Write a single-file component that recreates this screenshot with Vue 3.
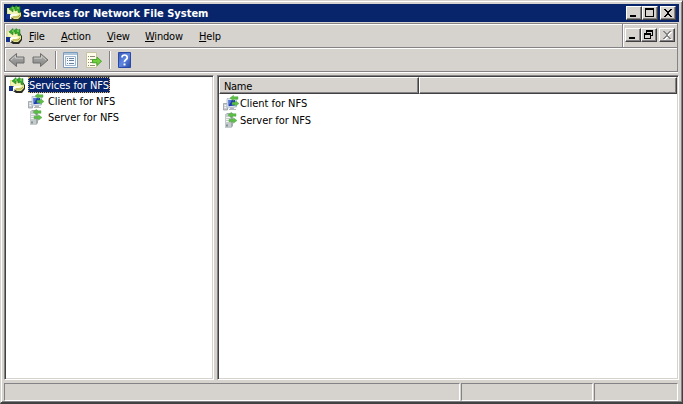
<script setup>
const menus = [
  { name: 'File', width: 32 },
  { name: 'Action', width: 46 },
  { name: 'View', width: 38 },
  { name: 'Window', width: 54 },
  { name: 'Help', width: 40 },
]
const children = [
  { name: 'Client for NFS', icon: '#client' },
  { name: 'Server for NFS', icon: '#server' },
]
</script>

<template>
  <div class="window">
    <svg class="defs" width="0" height="0">
      <defs>
        <linearGradient id="arrowFill" x1="0" y1="0" x2="0" y2="1">
          <stop offset="0" stop-color="#b4b4b2" /><stop offset="1" stop-color="#828282" />
        </linearGradient>
        <linearGradient id="helpFill" x1="0" y1="0" x2="1" y2="1">
          <stop offset="0" stop-color="#3459b4" /><stop offset=".5" stop-color="#5f86e0" /><stop offset="1" stop-color="#2446a5" />
        </linearGradient>
        <symbol id="nfs" viewBox="0 0 16 16">
          <path d="M1 4h12l3 4v4l-3 4H7l-3-2-3-5z" fill="#2a2a20" />
          <path d="M1 3h12v3l2 2v3l-3 3H8l-3-2-4-3z" fill="#dfe58c" />
          <path d="M2 4h3v2h5l3 2v2H5L2 8z" fill="#f3f4b8" />
          <path d="M5 9h6l1 1-2 1H7l-2 1z" fill="#fffef0" />
          <path d="M3 4 7 .5V2h2l1-1.5 2 1.500 2-.5v6h-2V5L9 6V4H7v3z" fill="#35a82c" stroke="#1f7c1c" stroke-width=".5" />
          <path d="M6 3h2M11 3h2" stroke="#a6e47a" />
          <path d="M7 12h5l2-2" fill="none" stroke="#b5a343" />
          <path d="M0 9h5v5H0z" fill="#12308c" /><path d="M4 9.500h1.500V14H4z" fill="#fff" />
        </symbol>
        <symbol id="client" viewBox="0 0 16 16">
          <path d="M.5 8.5h4V15h-4z" fill="#c9cdd1" stroke="#8b9198" stroke-width=".7" />
          <path d="M1.500 10.500h2M1.500 12.500h2" stroke="#f8f8f8" />
          <path d="M4 3.500h9.500V12L4 13z" fill="#dfe6ef" stroke="#9ba9bc" stroke-width=".6" />
          <path d="M5.500 5H12v5.500l-6.500.8z" fill="#1c3eb0" /><path d="M5.500 5H9l-3 5z" fill="#5577d8" />
          <path d="M7 12.500h4V14h2v1H6v-1h1z" fill="#b5b9be" />
          <path d="M7 3 10.500.3V1.700H15v2.600h-4.500v1.400zM16 8.500 12.500 5.800v1.400H9v2.600h3.500v1.400z" fill="#5dbf46" stroke="#45a039" stroke-width=".4" />
        </symbol>
        <symbol id="server" viewBox="0 0 16 16">
          <path d="M2 3 4 1h6v13l-2 2H2z" fill="#a4aaaf" />
          <path d="M2 2h6v14H2z" fill="#c5cacc" /><path d="M3 5.500h4M3 7.500h4M3 9.500h4" stroke="#f4f6f6" />
          <path d="M3 12.500h2v2H3z" fill="#7d9690" />
          <path d="M5 3 8.500.3V1.700H13v2.600H8.500v1.400zM14 8.500 10.500 5.800v1.400H6v2.600h4.500v1.400z" fill="#5dbf46" stroke="#45a039" stroke-width=".4" />
        </symbol>
        <symbol id="arrow" viewBox="0 0 18 16">
          <path d="M1 8 8.5 1.5V5H16v6H8.5v3.5z" fill="url(#arrowFill)" stroke="#6f6f6f" />
          <path d="M3 8 7.5 4v2.2H15" fill="none" stroke="#c9c9c7" />
        </symbol>
      </defs>
    </svg>

    <header class="title">
      <svg class="app-icon" width="16" height="16"><use href="#nfs" /></svg>
      <span class="title-text">Services for Network File System</span>
      <div class="buttons">
        <button class="btn"><svg width="14" height="12" shape-rendering="crispEdges"><path d="M3 8h6v2H3z" /></svg></button>
        <button class="btn"><svg width="14" height="12" shape-rendering="crispEdges"><path fill-rule="evenodd" d="M2 1h9v9H2zM3 3h7v6H3z" /></svg></button>
        <button class="btn close"><svg width="14" height="12" shape-rendering="crispEdges"><path d="M3 2h2v1h1v1h2V3h1V2h2v1h-1v1H9v1H8v2h1v1h1v1h1v1H9V9H8V8H6v1H5v1H3V9h1V8h1V7h1V5H5V4H4V3H3z" /></svg></button>
      </div>
    </header>

    <section class="bars">
      <div class="menubar">
        <svg class="app-icon" width="16" height="16"><use href="#nfs" /></svg>
        <nav>
          <span v-for="m in menus" :key="m.name" class="menu" :style="{ width: m.width + 'px' }"><u>{{ m.name[0] }}</u>{{ m.name.slice(1) }}</span>
        </nav>
        <div class="buttons child">
          <button class="btn"><svg width="14" height="12" shape-rendering="crispEdges"><path d="M3 8h6v2H3z" /></svg></button>
          <button class="btn"><svg width="14" height="12" shape-rendering="crispEdges"><path fill-rule="evenodd" d="M4 1h7v6H9v3H2V4h2zM5 3v1h4v2h1V3zM3 6v3h5V6z" /></svg></button>
          <button class="btn close"><svg width="14" height="12" shape-rendering="crispEdges"><path fill="#fff" d="M4 3h2v1h1v1h2V4h1V3h2v1h-1v1h-1v1H9v2h1v1h1v1h1v1h-2v-1H9V9H7v1H6v1H4v-1h1V9h1V8h1V6H6V5H5V4H4z" /><path fill="#858585" d="M3 2h2v1h1v1h2V3h1V2h2v1h-1v1H9v1H8v2h1v1h1v1h1v1H9V9H8V8H6v1H5v1H3V9h1V8h1V7h1V5H5V4H4V3H3z" /></svg></button>
        </div>
      </div>
      <div class="toolbar">
        <svg width="18" height="16"><use href="#arrow" /></svg>
        <svg class="forward" width="18" height="16"><use href="#arrow" /></svg>
        <i class="sep"></i>
        <svg class="props" width="16" height="16">
          <path d="M.5.5h14v15H.5z" fill="#fcfdff" stroke="#7b9bb8" /><path d="M1 1h13v2H1z" fill="#adc3da" />
          <path d="M2.500 4.500h10v9h-10z" fill="#f5f8fc" stroke="#9fb5cb" />
          <path d="M4 6.500h1M6 6.500h5M4 8.500h1M6 8.500h5M4 11.500h1M6 11.500h5" stroke="#6683a0" />
        </svg>
        <svg class="export" width="18" height="16">
          <path d="M.5.5h10v15H.5z" fill="#fffde9" stroke="#c8c4a3" />
          <path d="M2 4.500h1M4 4.500h5M2 7.500h1M4 7.500h4M2 10.500h1M4 10.500h4M2 13.500h1M4 13.500h5" stroke="#8c8c7b" />
          <path d="M6.500 7.500H11V5l4.500 4.300L11 13.500v-2.700H6.500z" fill="#73ce3e" stroke="#47a629" />
        </svg>
        <i class="sep second"></i>
        <svg class="help" width="14" height="16">
          <path d="M.5.5h12v15H.5z" fill="url(#helpFill)" stroke="#2949a4" />
          <path d="M4 5.500Q4 3 6.500 3t2.800 2.500q0 1.300-1.500 2.300T6.500 10.200" fill="none" stroke="#fff" stroke-width="1.7" /><path d="M5.500 11.500h2v2h-2z" fill="#fff" />
        </svg>
      </div>
    </section>

    <main class="panes">
      <aside class="pane tree">
        <div class="root"><svg width="16" height="16"><use href="#nfs" /></svg><span class="selected"><b>Services for NFS</b></span></div>
        <div v-for="c in children" :key="c.name" class="child-row"><svg width="16" height="16"><use :href="c.icon" /></svg><span class="label">{{ c.name }}</span></div>
      </aside>
      <section class="pane list">
        <div class="columns"><div class="column name"><span>Name</span></div><div class="column"></div></div>
        <div v-for="c in children" :key="c.name" class="list-row"><svg width="16" height="16"><use :href="c.icon" /></svg><span class="label">{{ c.name }}</span></div>
      </section>
    </main>

    <footer class="status"><div></div><div></div><div></div></footer>
  </div>
</template>

<style>
body { margin: 0; overflow: hidden; }
</style>
<style scoped>
* { box-sizing: border-box; }
.window {
  width: 683px; height: 404px; padding: 2px 3px 1px 2px; display: flex; flex-direction: column;
  background: #d6d3ce; border: 1px solid; border-color: #d6d3ce #424142 #424142 #d6d3ce; border-width: 1px 1px 2px 1px;
  box-shadow: inset 1px 1px #fff, inset -1px -1px #848284;
  font: 11px/13px "DejaVu Sans Condensed", "DejaVu Sans", sans-serif; font-stretch: condensed; color: #000;
}
.defs { position: absolute; }
svg { display: block; flex: none; }
.title { height: 18px; margin: 1px 0 0 1px; background: #08246b; display: flex; align-items: center; padding: 0 3px 0 2px; flex: none; }
.title-text { color: #fff; font-weight: bold; font-size: 11px; margin-left: 1px; white-space: nowrap; letter-spacing: 0; }
.buttons { display: flex; margin-left: auto; }
.btn { width: 16px; height: 14px; padding: 0; border: 1px solid; border-color: #fff #424142 #424142 #fff; background: #d6d3ce; box-shadow: inset -1px -1px #848284; }
.close { margin-left: 2px; }
.bars { height: 49px; margin: 1px 1px 0 1px; border: 1px solid #848284; box-shadow: inset 1px 1px #fff, 0 1px #fff; flex: none; }
.menubar { height: 24px; display: flex; align-items: center; border-bottom: 1px solid #848284; padding-left: 1px; }
nav { display: flex; margin-left: 7px; padding-top: 1px; }
.menu { white-space: nowrap; letter-spacing: -.2px; }
u { text-underline-offset: 1px; text-decoration-thickness: 1px; }
.child { border-left: 1px solid #848284; height: 23px; padding: 4px 2px 0 2px; box-shadow: inset 1px 0 #fff; }
.toolbar { height: 23px; display: flex; align-items: center; padding: 1px 0 0 3px; box-shadow: inset 0 1px #fff; }
.forward { transform: scaleX(-1); margin-left: 5px; }
.sep { width: 2px; height: 18px; border-left: 1px solid #848284; border-right: 1px solid #fff; margin-left: 6px; }
.props { margin-left: 6px; }
.export { margin-left: 7px; }
.second { margin-left: 5px; }
.help { margin-left: 7px; }
.panes { height: 305px; display: flex; gap: 3px; margin: 3px 0 0 1px; flex: none; }
.pane { background: #fff; border: 1px solid; border-color: #848284 #fff #fff #848284; box-shadow: inset 1px 1px #424142, inset -1px -1px #d6d3ce; }
.tree { width: 210px; padding: 1px 0 0 3px; }
.root { display: flex; align-items: center; height: 16px; padding-left: 1px; }
.selected { background: #08246b; color: #fff; height: 16px; margin-left: 3px; padding: 1px 0; border: 1px dotted #dcb96a; width: 82px; line-height: 13px; white-space: nowrap; }
.selected b { font-weight: normal; letter-spacing: -.05px; }
.child-row { display: flex; align-items: center; height: 16px; padding-left: 20px; }
.child-row .label { margin-left: 4px; }
.label { white-space: nowrap; letter-spacing: -.04px; }
.list { flex: 1; padding: 1px; }
.columns { display: flex; height: 17px; }
.column { flex: 1; background: #d6d3ce; border: 1px solid; border-color: #fff #424142 #424142 #fff; box-shadow: inset -1px -1px #848284; }
.name { flex: 0 0 200px; padding: 2px 0 0 4px; letter-spacing: -.3px; }
.list-row { display: flex; align-items: center; height: 17px; padding-left: 4px; }
.list-row .label { margin-left: 1px; padding-top: 1px; }
.status { display: grid; grid-template-columns: 456px 132px 84px; gap: 1px; height: 18px; margin: 3px 0 0 1px; flex: none; }
.status div { border: 1px solid; border-color: #848284 #fff #fff #848284; }
</style>
